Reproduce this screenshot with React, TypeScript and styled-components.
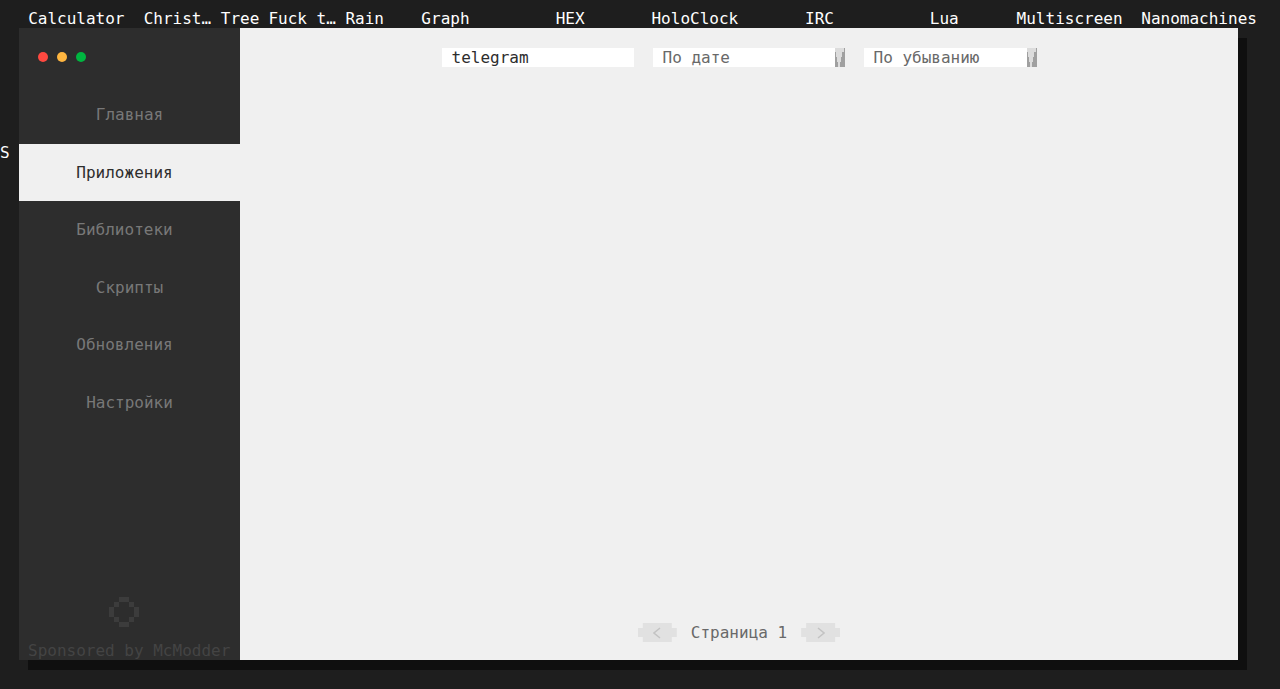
import React, { useState } from "react";
import styled, { createGlobalStyle } from "styled-components";

const GlobalStyle = createGlobalStyle`
  * { box-sizing: border-box; }
  body {
    margin: 0;
    background: #1e1e1e;
    font: 16px/19px "DejaVu Sans Mono", "Liberation Mono", monospace;
  }
  button, input, select { font: inherit; border: 0; margin: 0; padding: 0; }
`;

const Desktop = styled.div`
  min-height: 100vh;
  display: flex;
  flex-direction: column;
  overflow: hidden;
`;

const Labels = styled.ul`
  list-style: none;
  margin: 0;
  padding: 9px 24px 0 19px;
  display: grid;
  grid-template-columns: repeat(10, minmax(0, 1fr));
  gap: 10px;
  height: 28px;
  color: #ffffff;
  position: relative;
  z-index: 1;
`;

const Label = styled.li<{ $odd: boolean }>`
  text-align: center;
  white-space: nowrap;
  padding-right: ${(p) => (p.$odd ? "10px" : "0")};
`;

const Workspace = styled.div`
  flex: 1;
  display: flex;
  padding: 0 42px 29px 0;
`;

const Gutter = styled.div`
  width: 19px;
  flex: none;
  padding-top: 115px;
  color: #ffffff;
`;

const Window = styled.div`
  flex: 1;
  display: flex;
  background: #f0f0f0;
  box-shadow: 9px 10px 0 #0f0f0f;
`;

const Sidebar = styled.aside`
  width: 221px;
  flex: none;
  display: flex;
  flex-direction: column;
  background: #2d2d2d;
`;

const WindowControls = styled.div`
  display: flex;
  gap: 9px;
  height: 58px;
  padding: 24px 19px;
`;

const ControlDot = styled.button<{ $color: string }>`
  width: 10px;
  height: 10px;
  border-radius: 50%;
  background: ${(p) => p.$color};
`;

const Nav = styled.nav`
  display: grid;
  grid-auto-rows: 1fr;
  height: 345px;
`;

const NavItem = styled.button<{ $active: boolean; $even: boolean }>`
  padding-right: ${(p) => (p.$even ? "10px" : "0")};
  background: ${(p) => (p.$active ? "#f0f0f0" : "transparent")};
  color: ${(p) => (p.$active ? "#2d2d2d" : "#787878")};
`;

const Sponsor = styled.div`
  margin-top: auto;
  display: flex;
  flex-direction: column;
  gap: 14px;
  padding-left: 9px;
  color: #444444;
  white-space: nowrap;
`;

const Ring = styled.svg`
  width: 30px;
  height: 30px;
  margin-left: 81px;
  fill: #3c3c3c;
`;

const Content = styled.main`
  flex: 1;
  display: flex;
  flex-direction: column;
  align-items: center;
  justify-content: space-between;
  padding: 20px 0 18px;
`;

const Filters = styled.div`
  display: flex;
  gap: 19px;
`;

const Search = styled.input`
  width: 192px;
  height: 19px;
  padding: 0 10px;
  border-radius: 0;
  outline: 0;
  background: #ffffff;
  color: #2d2d2d;
`;

const SelectBox = styled.div<{ $width: number }>`
  display: flex;
  width: ${(p) => p.$width}px;
  height: 19px;
  background: #ffffff;
`;

const Select = styled.select`
  flex: 1;
  min-width: 0;
  padding-left: 10px;
  appearance: none;
  border-radius: 0;
  background: transparent;
  color: #696969;
`;

const ArrowSvg = styled.svg`
  width: 10px;
  height: 19px;
  flex: none;
`;

const Pager = styled.div`
  display: flex;
  gap: 14px;
  color: #696969;
`;

const PageButton = styled.button`
  display: grid;
  place-items: center;
  width: 39px;
  height: 19px;
  background: #e1e1e1;
  clip-path: polygon(5px 0, 34px 0, 34px 5px, 39px 5px, 39px 14px, 34px 14px, 34px 19px, 5px 19px, 5px 14px, 0 14px, 0 5px, 5px 5px);
`;

const Chevron = styled.svg`
  width: 8px;
  height: 12px;
  fill: none;
  stroke: #c3c3c3;
  stroke-width: 1.5;
`;

const apps = [
  "Calculator", "Christ… Tree", "Fuck t… Rain", "Graph", "HEX",
  "HoloClock", "IRC", "Lua", "Multiscreen", "Nanomachines",
];

const sections = ["Главная", "Приложения", "Библиотеки", "Скрипты", "Обновления", "Настройки"];

const controls = [
  { name: "Закрыть", color: "#ff4940" },
  { name: "Свернуть", color: "#ffb640" },
  { name: "Развернуть", color: "#00b640" },
];

function Arrow() {
  return (
    <ArrowSvg viewBox="0 0 10 19" aria-hidden="true">
      <path fill="#dcdcdc" d="M0 0h10v19H0z" />
      <path fill="#a0a0a0" d="M0 4h1v5h1v5h1v5H0zM10 0v19H5v-5h1V9h1V4h2V0z" />
    </ArrowSvg>
  );
}

export default function App() {
  const [section, setSection] = useState("Приложения");
  const [query, setQuery] = useState("telegram");

  return (
    <Desktop>
      <GlobalStyle />
      <Labels>
        {apps.map((app) => (
          <Label key={app} $odd={app.length % 2 === 1}>{app}</Label>
        ))}
      </Labels>
      <Workspace>
        <Gutter>S</Gutter>
        <Window>
          <Sidebar>
            <WindowControls>
              {controls.map((c) => (
                <ControlDot key={c.name} $color={c.color} aria-label={c.name} />
              ))}
            </WindowControls>
            <Nav>
              {sections.map((name) => (
                <NavItem
                  key={name}
                  $active={name === section}
                  $even={name.length % 2 === 0}
                  onClick={() => setSection(name)}
                >
                  {name}
                </NavItem>
              ))}
            </Nav>
            <Sponsor>
              <Ring viewBox="0 0 6 6" shapeRendering="crispEdges" aria-hidden="true">
                <path d="M2 0h2v1H2zM1 1h1v1H1zM4 1h1v1H4zM0 2h1v2H0zM5 2h1v2H5zM1 4h1v1H1zM4 4h1v1H4zM2 5h2v1H2z" />
              </Ring>
              <span>Sponsored by McModder</span>
            </Sponsor>
          </Sidebar>
          <Content>
            <Filters>
              <Search aria-label="Поиск" value={query} onChange={(e) => setQuery(e.target.value)} />
              <SelectBox $width={192}>
                <Select aria-label="Сортировка">
                  <option>По дате</option>
                </Select>
                <Arrow />
              </SelectBox>
              <SelectBox $width={173}>
                <Select aria-label="Порядок">
                  <option>По убыванию</option>
                </Select>
                <Arrow />
              </SelectBox>
            </Filters>
            <Pager>
              <PageButton aria-label="Предыдущая страница">
                <Chevron viewBox="0 0 8 12"><path d="M7 1L1 6l6 5" /></Chevron>
              </PageButton>
              <span>Страница 1</span>
              <PageButton aria-label="Следующая страница">
                <Chevron viewBox="0 0 8 12"><path d="M1 1l6 5-6 5" /></Chevron>
              </PageButton>
            </Pager>
          </Content>
        </Window>
      </Workspace>
    </Desktop>
  );
}
